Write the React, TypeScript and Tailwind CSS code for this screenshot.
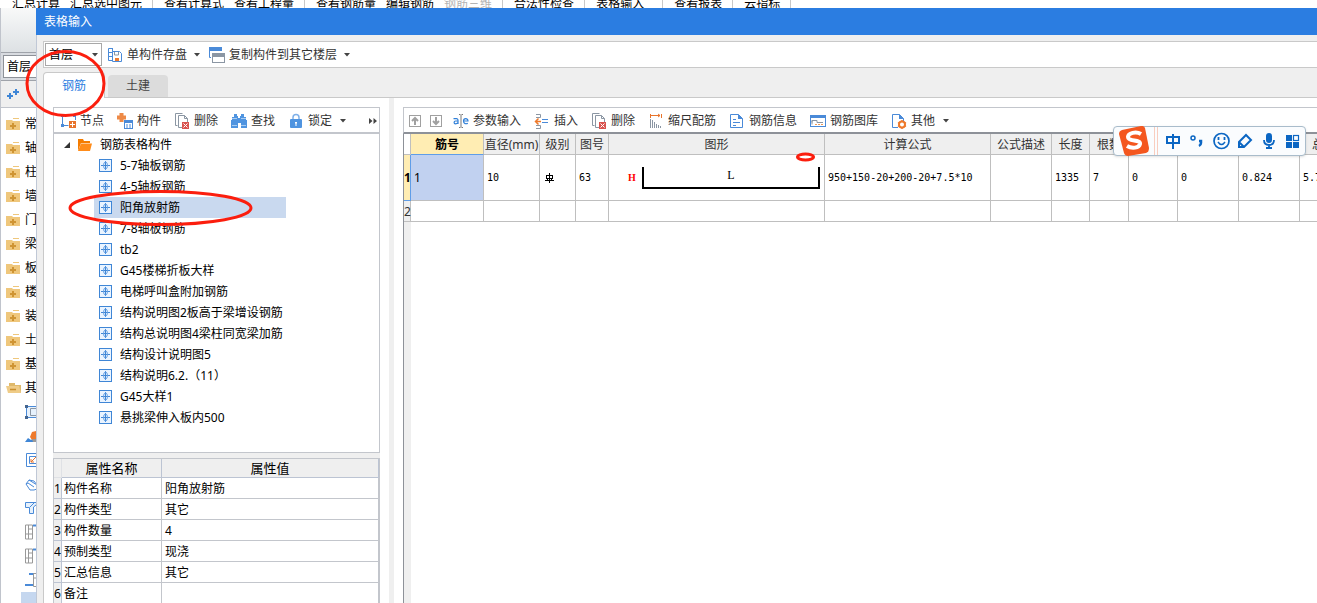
import { ReactNode, useState } from 'react';

type IconProps = { children: ReactNode; size?: string };

const Icon = ({ children, size = '0 0 16 16' }: IconProps) => (
    <svg viewBox={size} className="h-4 w-4 shrink-0" fill="none" aria-hidden="true">
        {children}
    </svg>
);

const Caret = () => (
    <svg viewBox="0 0 6 4" className="h-1 w-1.5 shrink-0" aria-hidden="true">
        <path d="M0 0h6L3 3.5z" fill="#444" />
    </svg>
);

const NodeIcon = () => (
    <Icon>
        <path d="M2.5 3v9M2.5 12.5h6M15.5 3v4" stroke="#4a8ad8" />
        <path d="M1 1h3v3H1zM13 1h3v3h-3zM1 11h3v3H1z" fill="#4a8ad8" />
        <rect x="9" y="8" width="7" height="7" fill="#e8742c" />
        <path d="M10 11.5h5M12.5 9v5" stroke="#fff" />
    </Icon>
);

const ComponentIcon = () => (
    <Icon>
        <path d="M2.500 0h4v2.500H9v4H6.500V9h-4V6.500H0v-4h2.500z" fill="#ee8a47" />
        <rect x="7.5" y="7.5" width="8" height="8" fill="#fff" stroke="#4a8ad8" />
        <path d="M7 7h9v3H7z" fill="#4a8ad8" />
        <path d="M9 12h2M12 12h2M9 14h2M12 14h2" stroke="#4a8ad8" />
    </Icon>
);

const DeleteIcon = () => (
    <Icon>
        <path d="M3.500 12.500H1.500V.5h7" stroke="#8b96a3" />
        <path d="M4.500 2.500h6l3 3v9h-9z" fill="#fff" stroke="#8b96a3" />
        <path d="M10.500 2.500v3h3" stroke="#8b96a3" />
        <rect x="8" y="9" width="7" height="7" fill="#d9534f" />
        <path d="M9.500 10.500l4 4M13.500 10.500l-4 4" stroke="#fff" />
    </Icon>
);

const FindIcon = () => (
    <Icon>
        <path d="M3 1h3v2h1v2h2V3h1V1h3v3h2v3h1v8h-6v-5H7v5H0V7h1V4h2z" fill="#4f94e0" />
        <path d="M1 5.500h5M10 5.500h5M1 12.500h5M10 12.500h5" stroke="#a9cdf3" />
    </Icon>
);

const LockIcon = () => (
    <Icon>
        <path d="M5 7V4.500a3 3 0 0 1 6 0V7" stroke="#7fb0e8" strokeWidth="1.500" />
        <rect x="2" y="6" width="12" height="9" rx="1" fill="#4f94e0" />
        <path d="M7 9h2v1.500h-.5V13h-1v-2.500H7z" fill="#fff" />
    </Icon>
);

const TreeItemIcon = () => (
    <svg viewBox="0 0 13 13" className="h-[13px] w-[13px] shrink-0" fill="none" aria-hidden="true">
        <rect x=".5" y=".5" width="12" height="12" fill="#eaf4ff" stroke="#3f86d6" />
        <path d="M2 6.500h9M6.500 2v9" stroke="#3f86d6" />
        <ellipse cx="6.500" cy="6.500" rx="2" ry="3.500" stroke="#6ba5e6" />
    </svg>
);

const FolderIcon = ({ open }: { open?: boolean }) =>
    open ? (
        <svg viewBox="0 0 16 12" className="-mr-0.5 h-3 w-4 shrink-0" fill="none" aria-hidden="true">
            <path d="M3 3V1h6v2h6v8H3z" fill="#dfb96b" />
            <path d="M0 4h13l2 7H2z" fill="#efcc88" />
            <path d="M4 7.500h6" stroke="#c98f2e" strokeWidth="1.500" />
        </svg>
    ) : (
        <svg viewBox="0 0 14 13" className="h-[13px] w-3.5 shrink-0" fill="none" aria-hidden="true">
            <path d="M0 2h6l1 1h7v9H0z" fill="#efc77c" />
            <path d="M7 .5h6" stroke="#efc77c" />
            <path d="M7 5v6M4 8h6" stroke="#cf9433" strokeWidth="2" />
        </svg>
    );

const menuGroups = [
    ['汇总计算', '汇总选中图元'],
    ['查看计算式', '查看工程量'],
    ['查看钢筋量', '编辑钢筋', '钢筋三维'],
    ['合法性检查'],
    ['表格输入'],
    ['查看报表'],
    ['云指标'],
];

const categories = ['常', '轴', '柱', '墙', '门', '梁', '板', '楼', '装', '土', '基', '其'];

const categoryTools: ReactNode[] = [
    <Icon key="slab">
        <path d="M1.500 1v14M1 2.500h15M1 13.500h15" stroke="#4a8ad8" />
        <path d="M2 3h14v10H2z" fill="#e6f1fc" />
        <path d="M16 4.500H5.500v7H16" stroke="#8b96a3" />
        <path d="M0 1h3v3H0zM0 12h3v3H0z" fill="#44658f" />
    </Icon>,
    <Icon key="earth">
        <path d="M0 14l3-4 3 2 3-2 7 4z" fill="#3f86d6" />
        <path d="M5 9l2-5 4-1v9H7z" fill="#ee7a2c" />
        <path d="M7 11h5v3H8z" fill="#999" />
    </Icon>,
    <Icon key="inner">
        <path d="M16 1.500H1.500v13H16" stroke="#4a8ad8" />
        <path d="M16 4.500H4.500v7H16" stroke="#4a8ad8" />
        <path d="M11 5L6 10M6 7v3h3" stroke="#e8742c" />
    </Icon>,
    <Icon key="pipe">
        <path d="M1 8l3-4 8 5v4l-3 1H5zM1 8l2-1 6 4M4 4l5 1 3 4" stroke="#4a8ad8" />
    </Icon>,
    <Icon key="beam">
        <path d="M.5 2.500H16M.5 2.500v5h4v6h4V7l5-4M5 7l4-4" stroke="#4a8ad8" fill="#e6f1fc" />
    </Icon>,
    <Icon key="wall1">
        <path d="M.5 1v14h7V1zM3.500 1v14M3.500 5h4M.5 10h7" stroke="#999" />
        <path d="M8 1.500h8" stroke="#4a8ad8" strokeWidth="2" />
    </Icon>,
    <Icon key="wall2">
        <path d="M.5 1v14h7V1zM3.500 1v14M3.500 5h4M.5 10h7" stroke="#999" />
        <path d="M8 1.500h8" stroke="#4a8ad8" strokeWidth="2" />
    </Icon>,
    <Icon key="stair">
        <path d="M4 2h5M0 13h9" stroke="#4a8ad8" strokeWidth="2" />
        <path d="M16 1.500H8.500v13H16M8.500 6h4" stroke="#999" />
    </Icon>,
];

const treeItems = [
    '5-7轴板钢筋',
    '4-5轴板钢筋',
    '阳角放射筋',
    '7-8轴板钢筋',
    'tb2',
    'G45楼梯折板大样',
    '电梯呼叫盒附加钢筋',
    '结构说明图2板高于梁增设钢筋',
    '结构总说明图4梁柱同宽梁加筋',
    '结构设计说明图5',
    '结构说明6.2.（11）',
    'G45大样1',
    '悬挑梁伸入板内500',
];

const properties = [
    ['构件名称', '阳角放射筋'],
    ['构件类型', '其它'],
    ['构件数量', '4'],
    ['预制类型', '现浇'],
    ['汇总信息', '其它'],
    ['备注', ''],
];

type ToolProps = { icon: ReactNode; label: string; caret?: boolean };

const ToolButton = ({ icon, label, caret }: ToolProps) => (
    <button type="button" className="flex h-5 shrink-0 items-center gap-1 rounded-sm px-1 whitespace-nowrap text-[#333]">
        {icon}
        <span>{label}</span>
        {caret && (
            <span className="ml-1">
                <Caret />
            </span>
        )}
    </button>
);

const CategoryRail = () => (
    <aside className="flex w-9 shrink-0 flex-col overflow-hidden border-l border-[#c0c4cc] bg-white">
        <div className="h-11 shrink-0 bg-linear-to-b from-[#f8f9f9] to-[#dde1e4]" />
        <div className="h-[29px] shrink-0 border-y border-[#9fa3aa] bg-[#d8dbe0] py-0.5 pl-0.5">
            <div className="flex h-[23px] w-20 items-center border border-[#8d9198] bg-white pl-[3px]">首层</div>
        </div>
        <div className="flex h-[27px] shrink-0 items-center border-b border-[#c0c4cc] bg-[#efefef] pl-1.5">
            <svg viewBox="0 0 12 12" className="h-3 w-3" aria-hidden="true">
                <path d="M3 5v6M0 8h6M9 1v6M6 4h6" stroke="#3f86d6" strokeWidth="2" />
            </svg>
        </div>
        <ul className="pt-1">
            {categories.map((name, i) => (
                <li key={name} className="flex h-6 items-center gap-[5px] pl-[5px] whitespace-nowrap">
                    <FolderIcon open={i === categories.length - 1} />
                    {name}
                </li>
            ))}
            {categoryTools.map((tool, i) => (
                <li key={i} className="flex h-6 items-center pl-6">
                    {tool}
                </li>
            ))}
            <li className="ml-5 h-6 bg-[#c5d7ef]" />
        </ul>
    </aside>
);

const ComponentTree = () => {
    const [selected, setSelected] = useState('阳角放射筋');

    return (
        <div className="shrink-0 border border-[#c3c6cc]">
            <div className="flex h-[26px] items-center gap-[5px] border-b-2 border-[#c3c6cc] pt-0.5 pl-0.5">
                <ToolButton icon={<NodeIcon />} label="节点" />
                <ToolButton icon={<ComponentIcon />} label="构件" />
                <ToolButton icon={<DeleteIcon />} label="删除" />
                <ToolButton icon={<FindIcon />} label="查找" />
                <ToolButton icon={<LockIcon />} label="锁定" caret />
                <button type="button" aria-label="更多" className="mr-0.5 ml-auto">
                    <svg viewBox="0 0 8 6" className="h-1.5 w-2" aria-hidden="true">
                        <path d="M0 0l3.500 3L0 6zM4.500 0L8 3 4.500 6z" fill="#444" />
                    </svg>
                </button>
            </div>
            <div className="h-[318px] overflow-hidden">
                <div className="flex h-[21px] items-center gap-2 pl-2.5">
                    <svg viewBox="0 0 6 6" className="h-1.5 w-1.5" aria-hidden="true">
                        <path d="M6 0v6H0z" fill="#333" />
                    </svg>
                    <svg viewBox="0 0 14 12" className="h-3 w-3.5" aria-hidden="true">
                        <path d="M0 12V0h5l1 2h6v2H3z" fill="#f57c00" />
                        <path d="M3 4.500h11L12 12H0z" fill="#ff8c1a" />
                    </svg>
                    钢筋表格构件
                </div>
                <ul>
                    {treeItems.map((item) => (
                        <li key={item} className="pl-10">
                            <button
                                type="button"
                                onClick={() => setSelected(item)}
                                className={`flex h-[21px] w-48 items-center gap-2 pl-[5px] whitespace-nowrap ${
                                    item === selected ? 'bg-[#c9d9ef]' : ''
                                }`}
                            >
                                <TreeItemIcon />
                                {item}
                            </button>
                        </li>
                    ))}
                </ul>
            </div>
        </div>
    );
};

const PropertyTable = () => (
    <div className="flex-1 overflow-hidden border border-b-0 border-[#c3c6cc]">
        <table className="w-full table-fixed border-separate border-spacing-0">
            <colgroup>
                <col className="w-2" />
                <col className="w-[100px]" />
                <col />
            </colgroup>
            <thead className="bg-[#efefef] text-[13px] leading-4">
                <tr className="h-[19px]">
                    <td className="border-r border-b border-[#dfe1e5] p-0" />
                    <th className="border-r border-b border-[#bcc4d3] p-0 font-normal">属性名称</th>
                    <th className="border-r border-b border-[#bcc4d3] p-0 font-normal">属性值</th>
                </tr>
            </thead>
            <tbody>
                {properties.map(([name, value], i) => (
                    <tr key={name} className="h-[21px] *:border-r *:border-b *:p-0 *:pt-0.5">
                        <td className="border-[#bcc4d3] bg-[#efefef]">{i + 1}</td>
                        <td className="border-[#c3c6cc] pl-0.5!">{name}</td>
                        <td className="border-[#c3c6cc] pl-[3px]!">{value}</td>
                    </tr>
                ))}
            </tbody>
        </table>
    </div>
);

const BarTable = () => (
    <table className="w-[966px] table-fixed border-separate border-spacing-0">
        <colgroup>
            <col className="w-[7px]" />
            <col className="w-[73px]" />
            <col className="w-[56px]" />
            <col className="w-[36px]" />
            <col className="w-[33px]" />
            <col className="w-[216px]" />
            <col className="w-[166px]" />
            <col className="w-[61px]" />
            <col className="w-[38px]" />
            <col className="w-[39px]" />
            <col className="w-[49px]" />
            <col className="w-[61px]" />
            <col className="w-[61px]" />
            <col className="w-[70px]" />
        </colgroup>
        <thead className="bg-[#efefef] text-[#333]">
            <tr className="h-[21px] *:border-r *:border-b *:border-[#bfbfbf] *:p-0 *:pt-0.5 *:font-normal *:whitespace-nowrap">
                <td className="bg-white" />
                <th className="border-b-[#5f9de8]! bg-[#ffedb3] font-bold! text-black">筋号</th>
                <th>直径(mm)</th>
                <th>级别</th>
                <th>图号</th>
                <th>图形</th>
                <th>计算公式</th>
                <th>公式描述</th>
                <th>长度</th>
                <th>根数</th>
                <th />
                <th />
                <th />
                <th>总重(kg)</th>
            </tr>
        </thead>
        <tbody>
            <tr className="h-[46px] font-['DejaVu_Sans_Mono',monospace] text-[10px] *:border-r *:border-b *:border-[#bfbfbf] *:p-0 *:pl-[3px] *:whitespace-nowrap">
                <td className="border-[#5f9de8]! bg-[#ffedb3] pl-0! font-['Noto_Sans',sans-serif] text-xs font-bold">1</td>
                <td className="bg-[#c1d1f0] font-['Noto_Sans',sans-serif] text-xs">1</td>
                <td>10</td>
                <td>
                    <svg viewBox="0 0 9 10" className="ml-0.5 h-2.5 w-[9px]" fill="none" aria-label="三级钢">
                        <path d="M4.500 0v10M0 7.500h9" stroke="#000" />
                        <rect x="1.500" y="2.500" width="6" height="3" stroke="#000" />
                        <path d="M2.500 5v3M6.500 5v3" stroke="#000" />
                    </svg>
                </td>
                <td>63</td>
                <td>
                    <div className="flex items-center pl-4">
                        <span className="w-3.5 font-['Liberation_Serif',serif] font-bold text-[#f00]">H</span>
                        <div className="flex h-[22px] w-[178px] justify-center border-2 border-t-0 border-black font-['Liberation_Serif',serif] text-xs leading-4">
                            L
                        </div>
                    </div>
                </td>
                <td>950+150-20+200-20+7.5*10</td>
                <td />
                <td>1335</td>
                <td>7</td>
                <td>0</td>
                <td>0</td>
                <td>0.824</td>
                <td>5.768</td>
            </tr>
            <tr className="h-[21px] *:border-r *:border-b *:border-[#bfbfbf] *:p-0 *:pt-0.5">
                <td className="bg-[#efefef] text-[#333]">2</td>
                {Array.from({ length: 13 }, (_, i) => (
                    <td key={i} />
                ))}
            </tr>
        </tbody>
    </table>
);

const BarPanel = () => (
    <section className="flex min-w-0 flex-1 flex-col bg-white pt-[9px] pl-[9px]">
        <div className="flex h-[27px] shrink-0 items-center gap-[5px] border-t border-b-2 border-l border-[#c3c6cc] border-b-[#8d9198] pt-0.5 pl-[5px]">
            <button type="button" aria-label="上移">
                <svg viewBox="0 0 12 12" className="h-3 w-3" fill="none" stroke="#a0a0a0" aria-hidden="true">
                    <rect x=".5" y=".5" width="11" height="11" />
                    <path d="M6 10V3M3 6l3-3 3 3" strokeWidth="2" />
                </svg>
            </button>
            <button type="button" aria-label="下移" className="mx-1 mr-0.5 ml-1">
                <svg viewBox="0 0 12 12" className="h-3 w-3" fill="none" stroke="#a0a0a0" aria-hidden="true">
                    <rect x=".5" y=".5" width="11" height="11" />
                    <path d="M6 2v7M3 6l3 3 3-3" strokeWidth="2" />
                </svg>
            </button>
            <ToolButton
                icon={
                    <Icon>
                        <path d="M8 2v12M6 1.500h1.500M8.500 1.500H10M6 14.500h1.500M8.500 14.500H10" stroke="#777" />
                        <path
                            d="M.5 5.700h3a1.500 1.500 0 0 1 1.500 1.500V11M5 8h-2.500a1.400 1.400 0 0 0 0 2.800Q4 10.800 5 9.500M10.500 8h4.500c0-3.200-4.500-3.200-4.500 0 0 3 2.800 3.200 4.300 2.200"
                            stroke="#2f7fd8"
                            strokeWidth="1.200"
                        />
                    </Icon>
                }
                label="参数输入"
            />
            <ToolButton
                icon={
                    <Icon>
                        <path d="M2 1.500h4.500v3H2M2 15.500h4.500v-3H2" stroke="#8b96a3" />
                        <path d="M8 6.500h6M8 9.500h6" stroke="#4a8ad8" />
                        <path d="M7 8.500H2M4.500 5.500l-3 3 3 3" stroke="#ee7a2c" strokeWidth="1.500" />
                    </Icon>
                }
                label="插入"
            />
            <ToolButton icon={<DeleteIcon />} label="删除" />
            <ToolButton
                icon={
                    <Icon>
                        <path d="M2.500 1v4M13.500 1v4M3 2.500h9M10 1l2 1.500L10 4" stroke="#e8742c" />
                        <path d="M2.500 6v9M4.500 7v8M6.500 9v6M8.500 11v4M10.500 12v3M12.500 13v2" stroke="#8b96a3" />
                    </Icon>
                }
                label="缩尺配筋"
            />
            <ToolButton
                icon={
                    <Icon>
                        <path d="M1.500 1.500h8l4 4v9h-12z" fill="#fff" stroke="#4a8ad8" />
                        <path d="M9 1l5 5H9z" fill="#4a8ad8" />
                        <path d="M4 6.500h3M4 9.500h7M4 12.500h3" stroke="#4a8ad8" />
                    </Icon>
                }
                label="钢筋信息"
            />
            <ToolButton
                icon={
                    <Icon>
                        <rect x=".5" y="2.500" width="15" height="11" fill="#fff" stroke="#4a8ad8" />
                        <path d="M0 2h16v3H0z" fill="#4a8ad8" />
                        <path d="M2 9.500v-2h5v2h6M2 7.500v4" stroke="#8b96a3" />
                        <path d="M5 11.500h9" stroke="#ee9a57" strokeDasharray="2 1" />
                    </Icon>
                }
                label="钢筋图库"
            />
            <ToolButton
                icon={
                    <Icon>
                        <path d="M7 14.500H1.500V1.500h7l4 4V8" stroke="#4a8ad8" />
                        <path d="M8 1l5 5H8z" fill="#4a8ad8" />
                        <circle cx="11" cy="11.500" r="3" stroke="#ee7a2c" strokeWidth="2" />
                        <path
                            d="M11 7v2M11 14v2M7 9.500l1.500 1M15 9.500l-1.500 1M7 13.500l1.500-1M15 13.500l-1.500-1"
                            stroke="#ee7a2c"
                            strokeWidth="1.500"
                        />
                    </Icon>
                }
                label="其他"
                caret
            />
        </div>
        <div className="flex flex-1 flex-col overflow-hidden border-l border-[#8d9198]">
            <BarTable />
            <div className="w-[7px] flex-1 bg-[#efefef]" />
        </div>
    </section>
);

const ImeBar = () => (
    <div className="absolute top-[126px] right-[11px] flex h-[30px] w-[193px] items-center rounded-sm border border-[#a9bccb] bg-[#fafcfe] pl-1 shadow-sm">
        <svg viewBox="0 0 32 30" className="h-[30px] w-8 shrink-0" fill="none" aria-hidden="true">
            <path d="M4 4L23 0q3-.5 4 2l4 20q0 4-3 5L10 30q-3 0-4-3L1 8q0-3 3-4z" fill="#f4571f" />
            <path d="M23 8c-5-3-13-1-13 3 0 5 13 2 12 7-1 4-8 5-13 2" stroke="#fff" strokeWidth="4" />
        </svg>
        <div className="mx-1 h-full w-1 shrink-0 border-x border-[#f8cdbf]" />
        <svg
            viewBox="0 0 138 28"
            className="h-7 w-[138px] shrink-0"
            fill="none"
            stroke="#0b66c3"
            strokeWidth="2"
            aria-hidden="true"
        >
            <path d="M5 10h12v6H5zM11 7v15" />
            <circle cx="31" cy="11" r="2" strokeWidth="1.500" />
            <path d="M37 14h2v2q0 2-2 3" strokeWidth="2.500" />
            <circle cx="59.500" cy="14" r="7.500" strokeWidth="1.700" />
            <path d="M56 15q3.500 5 7 0" strokeWidth="1.500" />
            <path d="M56.500 10v3M62.500 10v3" strokeWidth="1.800" />
            <path d="M77 15l7-7 5 5-7 7h-5zM77 15l5 5" />
            <rect x="104" y="6" width="6" height="10" rx="3" fill="#0b66c3" stroke="none" />
            <path d="M102 13q0 5 5 5t5-5M107 18v3M104 21h6" strokeWidth="1.800" />
            <path d="M124 8h6v6h-6zM124 15h6v6h-6zM131 15h6v6h-6z" fill="#0b66c3" stroke="none" />
            <rect x="131.500" y="8.500" width="5" height="5" strokeWidth="1.200" />
        </svg>
    </div>
);

const Annotations = () => (
    <svg className="pointer-events-none absolute inset-0 h-full w-full" fill="none" stroke="#fb1e0e" aria-hidden="true">
        <ellipse cx="65.500" cy="83.500" rx="38.500" ry="32" strokeWidth="3" />
        <ellipse cx="160.500" cy="208" rx="90.500" ry="16.500" strokeWidth="3" />
        <ellipse cx="805.500" cy="157" rx="8" ry="3" strokeWidth="3" />
    </svg>
);

const App = () => {
    const [tab, setTab] = useState('钢筋');

    return (
        <div className="relative flex h-screen flex-col overflow-hidden bg-white font-['Noto_Sans','Noto_Sans_CJK_SC',sans-serif] text-xs leading-4 text-black">
            <nav className="flex h-2 shrink-0 items-center overflow-hidden pl-px">
                {menuGroups.map((group, i) => (
                    <div key={i} className="flex h-2 items-center gap-2.5 border-r border-[#c8c8c8] pr-2.5 pl-[11px]">
                        {group.map((label) => (
                            <span
                                key={label}
                                className={`whitespace-nowrap ${label === '钢筋三维' ? 'text-[#b4b4b4]' : ''} ${
                                    label === '表格输入' ? 'pr-2' : ''
                                }`}
                            >
                                {label}
                            </span>
                        ))}
                    </div>
                ))}
            </nav>

            <div className="flex min-h-0 flex-1">
                <CategoryRail />

                <main className="flex min-w-0 flex-1 flex-col border-l border-[#c0c8d6] bg-[#efefef]">
                    <h1 className="-ml-px flex h-[27px] shrink-0 items-center bg-[#2b7de1] pl-2 text-white">表格输入</h1>

                    <div className="mt-1.5 ml-1.5 flex h-[27px] shrink-0 items-center gap-[9px] border border-r-0 border-[#c9c9c9] bg-white pl-px">
                        <div className="relative flex items-center">
                            <select
                                aria-label="楼层"
                                className="h-[23px] w-[57px] appearance-none border border-[#a8a8a8] bg-white pl-[3px]"
                            >
                                <option>首层</option>
                            </select>
                            <span className="pointer-events-none absolute right-1">
                                <Caret />
                            </span>
                        </div>
                        <button type="button" className="-ml-1 flex items-center gap-1 whitespace-nowrap text-[#333]">
                            <Icon>
                                <path d="M5 13.500H1.500V1.500H5M1 5.500h4M1 9.500h4M5.500 1v5" stroke="#4a8ad8" />
                                <path d="M5.500 4.500h7l2 2v8h-9z" fill="#fff" stroke="#4a8ad8" />
                                <path d="M7.500 5v3h4V5" stroke="#8b96a3" />
                                <path d="M8 11h4v3H8z" fill="#ee7a2c" />
                            </Icon>
                            单构件存盘
                            <span className="ml-[3px]">
                                <Caret />
                            </span>
                        </button>
                        <button type="button" className="flex items-center gap-1 whitespace-nowrap text-[#333]">
                            <Icon>
                                <path d="M2 10.500H.5V1.500h12V4" stroke="#4a8ad8" />
                                <path d="M0 0h13v4H0z" fill="#4a8ad8" />
                                <rect x="3.500" y="6.500" width="12" height="9" fill="#fff" stroke="#8b96a3" />
                                <path d="M3 6h13v4H3z" fill="#8b96a3" />
                            </Icon>
                            复制构件到其它楼层
                            <span className="ml-[3px]">
                                <Caret />
                            </span>
                        </button>
                    </div>

                    <div className="flex h-[30px] shrink-0 items-end pl-0" role="tablist">
                        <button
                            type="button"
                            role="tab"
                            aria-selected={tab === '钢筋'}
                            onClick={() => setTab('钢筋')}
                            className="ml-1.5 h-[26px] w-[62px] rounded-t-sm border border-b-0 border-[#c9c9c9] bg-white text-[#2b7de1]"
                        >
                            钢筋
                        </button>
                        <div className="flex h-full flex-1 items-end border-b border-[#c9c9c9] pl-[3px]">
                            <button
                                type="button"
                                role="tab"
                                aria-selected={tab === '土建'}
                                onClick={() => setTab('土建')}
                                className="h-[22px] w-[60px] rounded-t-sm bg-[#dcdcdc] text-[#444]"
                            >
                                土建
                            </button>
                        </div>
                    </div>

                    <div className="ml-1.5 flex min-h-0 flex-1 border-l border-[#c9c9c9] bg-white">
                        <section className="flex w-[345px] shrink-0 flex-col px-[9px] pt-[9px]">
                            <ComponentTree />
                            <div className="h-[5px] shrink-0 bg-[#efefef]" />
                            <PropertyTable />
                        </section>
                        <div className="w-[5px] shrink-0 bg-[#efefef]" />
                        <BarPanel />
                    </div>
                </main>
            </div>

            <ImeBar />
            <Annotations />
        </div>
    );
};

export default App;
